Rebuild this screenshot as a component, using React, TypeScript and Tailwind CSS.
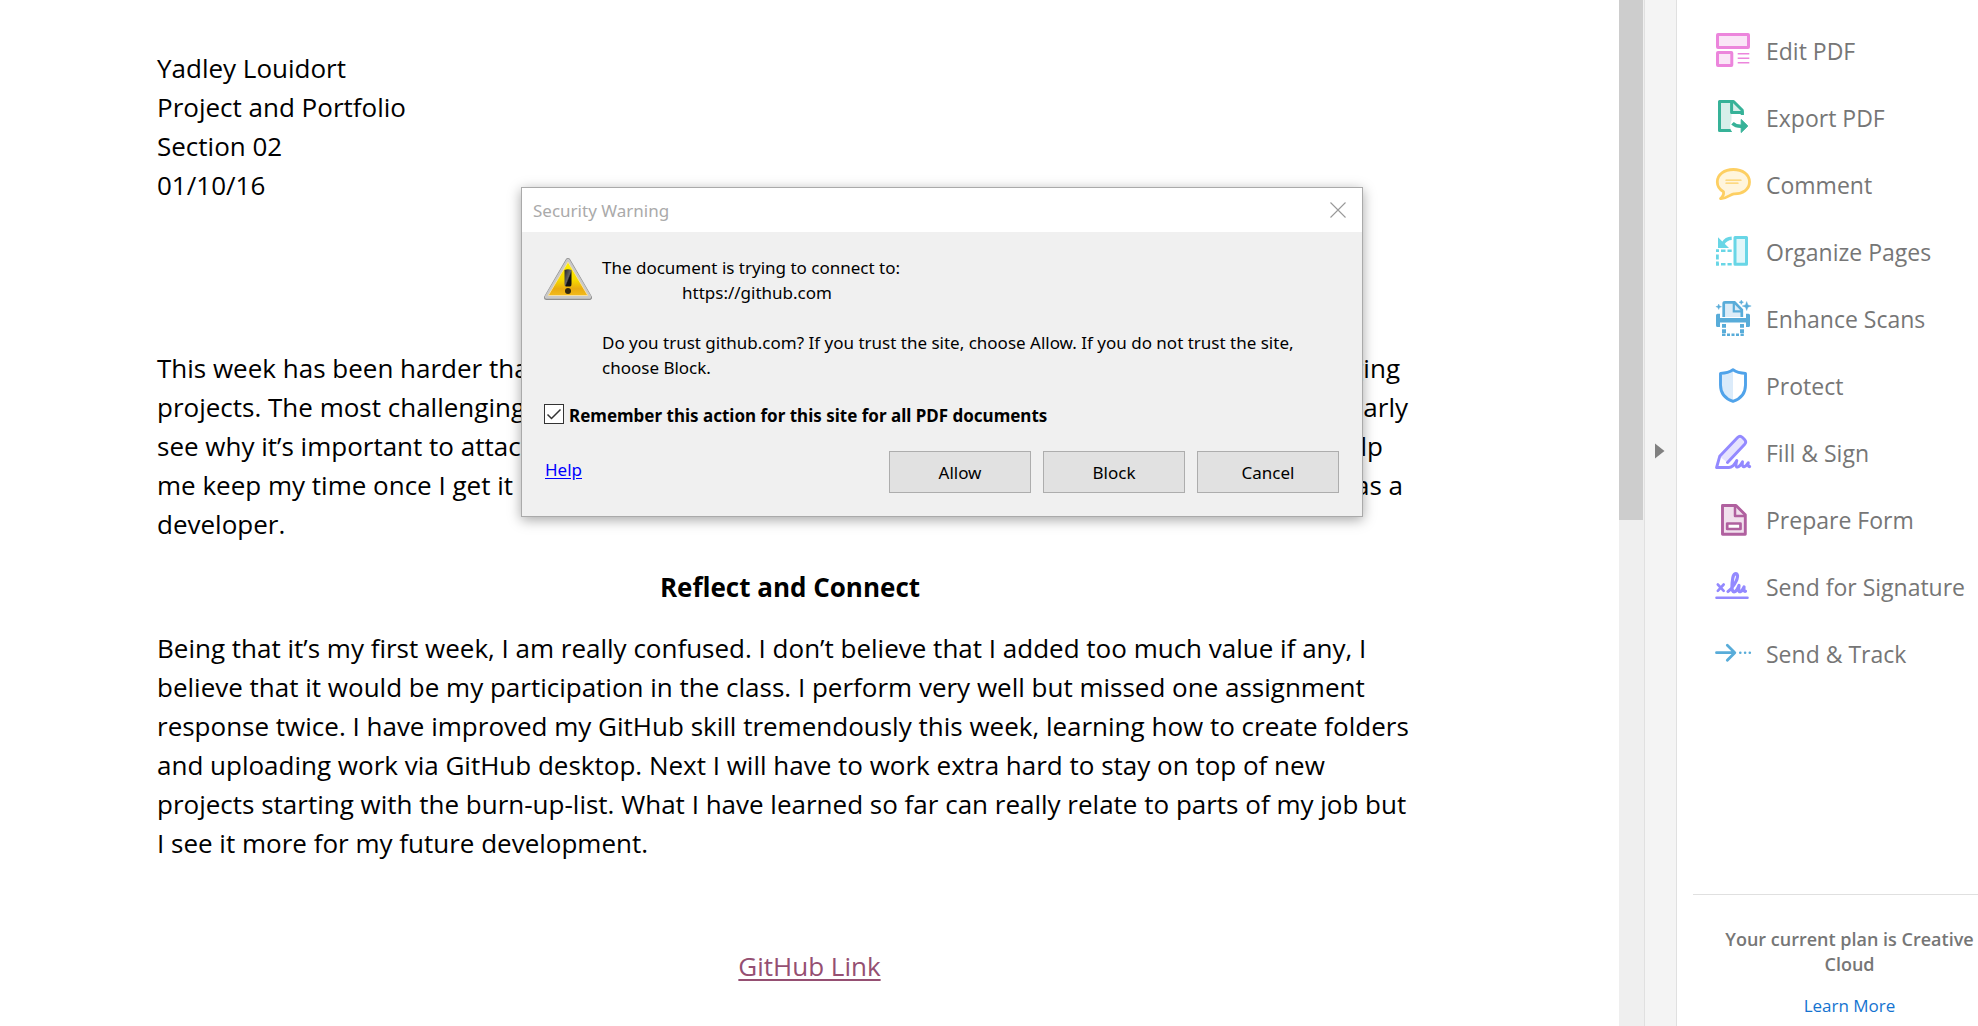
import { useState, type ReactNode } from 'react';

const iconProps = {
  viewBox: '0 0 37 37',
  className: 'h-[37px] w-[37px] shrink-0',
  fill: 'none',
  'aria-hidden': true,
} as const;

const EditIcon = () => (
  <svg {...iconProps} stroke="#ec85dc" strokeWidth="3" strokeLinejoin="round">
    <rect x="2.5" y="2.5" width="31" height="13" rx="0.5" fill="#fae5f7" />
    <rect x="2.5" y="20.5" width="14.3" height="13" rx="0.5" fill="#fae5f7" />
    <path d="M22.7 21.7H34.3M22.7 26.3H34.3M22.7 30.7H34.3" strokeWidth="1.4" />
  </svg>
);

const ExportIcon = () => (
  <svg {...iconProps} stroke="#36b298" strokeWidth="3" strokeLinejoin="round">
    <path d="M17 31.5H4.5V2.5H18.5L27.3 11.3V15H16.5V31.5Z" fill="#d7efea" stroke="none" />
    <path d="M17 31.5H4.5V2.5H18.5L27.3 11.3V16" />
    <path d="M16.6 3V13.6H27.5" />
    <circle cx="25" cy="27" r="10" fill="#fff" stroke="none" />
    <path d="M16.600 13.600H28.700M27.300 13.600V16" strokeWidth="2.800" />
    <path d="M17.5 24.2Q21 27.6 27 27.2" strokeWidth="3.6" />
    <path d="M26.2 20.5L32.8 27L26.2 33.5Z" fill="#36b298" strokeWidth="1" />
  </svg>
);

const CommentIcon = () => (
  <svg {...iconProps} stroke="#fdcf62" strokeLinecap="round" strokeLinejoin="round">
    <path
      d="M18.3 3.5C27.5 3.5 34.5 8.5 34.5 16C34.5 23.5 27.5 28 19 27.8C15.5 28 12 33 5.5 32.5C8.5 30 9 28.5 8.5 25.7C4.5 23.5 2.3 20 2.3 16C2.3 8.5 9.5 3.5 18.3 3.5Z"
      fill="#fff5dc"
      strokeWidth="2.8"
    />
    <path d="M11 14.2H26M11 17.2H23" strokeWidth="1.3" />
  </svg>
);

const OrganizeIcon = () => (
  <svg {...iconProps} stroke="#68d6e6">
    <rect x="20" y="4.5" width="11.5" height="26.7" fill="#e1f7fa" strokeWidth="3" strokeLinejoin="round" />
    <path d="M1 17.7H4M6 17.7H10.5M12.5 17.7H16.7M1 31.3H4M6 31.3H10.5M12.5 31.3H16.7" strokeWidth="2.6" />
    <path d="M2.4 16.4V19M2.4 21.5V26.5M2.4 28.5V32.6" strokeWidth="2.8" />
    <path d="M16.7 5.3Q11 5.5 8 10.5" strokeWidth="3.4" />
    <path d="M3 4.3V15H14Z" fill="#68d6e6" stroke="none" />
  </svg>
);

const ScanIcon = () => (
  <svg {...iconProps} stroke="#58acd9">
    <path d="M8.7 17V3.5Q8.7 2.4 10 2.4H19.5L26.8 9.7V17Z" fill="#dcecf7" stroke="none" />
    <path d="M8.7 17V3.5Q8.7 2.4 10 2.4H19.5L26.8 9.7V17" strokeWidth="2.7" />
    <path d="M18.8 3V11.3H26.5" strokeWidth="2.2" />
    <path
      d="M2.5 13.7H5V18H31V13.7H33.5Q35 13.7 35 15.2V25.5Q35 27 33.5 27H31V22.6H5V27H2.5Q1 27 1 25.5V15.2Q1 13.7 2.5 13.7Z"
      fill="#58acd9"
      stroke="none"
    />
    <path d="M9 24V27.8M9 29.3V33M27 24V27.8M27 29.3V33" strokeWidth="4" />
    <path d="M7 34.7H10.5M12 34.7H15M16.5 34.7H19.5M21 34.7H24M25.5 34.7H28.8" strokeWidth="2.6" />
    <path
      d="M3.7 4L4.5 6L6.5 6.7L4.5 7.5L3.7 9.5L2.9 7.5L0.9 6.7L2.9 6ZM26.3 0L27 1.5L28.5 2.2L27 2.9L26.3 4.5L25.6 2.9L24 2.2L25.6 1.5ZM31.7 1.5L32.9 4.9L36.2 6L32.9 7.2L31.7 10.5L30.5 7.2L27.2 6L30.5 4.9Z"
      fill="#58acd9"
      strokeWidth="0.4"
    />
  </svg>
);

const ShieldIcon = () => (
  <svg {...iconProps}>
    <path d="M18 2.6C14.5 5 10.5 6.2 5.5 6.4V18C5.5 26 9.5 31.5 18 34.3Z" fill="#dbebfa" />
    <path
      d="M18 2.7C21.5 5.2 25.5 6.2 30.5 6.4V18C30.5 26 26.5 31.5 18 34.3C9.5 31.5 5.5 26 5.5 18V6.4C10.5 6.2 14.5 5.2 18 2.7Z"
      stroke="#50a3ea"
      strokeWidth="2.9"
      strokeLinejoin="round"
    />
  </svg>
);

const SignIcon = () => (
  <svg {...iconProps} stroke="#9389ff" strokeWidth="2.9" strokeLinecap="round" strokeLinejoin="round">
    <path d="M22.5 3.3Q25 1 27.7 3.5L29.5 5.3Q32 7.8 29.5 10.2L12 28.3L4.5 22.5Z" fill="#e6e3fd" stroke="none" />
    <path d="M12.5 28.5L29.7 10.2Q31.8 7.800 29.5 5.5L27.5 3.5Q25 1.2 22.6 3.5L4.7 22.3L1.6 33.5H14C18 33.5 20.5 29 21.8 26.5C20.5 31 20.7 33.8 23 33C25 32.3 26.5 29.5 27.5 27.8C27 31.5 27.5 33.3 29.5 32.7C31.3 32 32.3 30 33.3 28.7C32.8 31.5 33.3 33 34.7 32.6" />
  </svg>
);

const FormIcon = () => (
  <svg {...iconProps} stroke="#b0609f" strokeWidth="2.9" strokeLinejoin="round">
    <path d="M7.5 4.5H21L30.3 13.8V33.2H7.5Z" fill="#f1e0ed" />
    <path d="M20 5V15H30" strokeWidth="2.5" />
    <rect x="12.2" y="22.5" width="13.3" height="5.5" fill="#fff" strokeWidth="2.7" />
  </svg>
);

const SignatureIcon = () => (
  <svg {...iconProps} stroke="#9389ff" strokeWidth="2.6" strokeLinecap="round" strokeLinejoin="round">
    <path d="M2.8 16.5L8.7 22.8M8.7 16.5L2.8 22.8M1.5 29.8H32.5" />
    <path
      d="M13 23.5C17 21 23 12 22.5 7.5C22 4 18.5 5.5 17.8 10C16.8 16 16 24.5 19.5 23.8C22 23 23 19.5 24 17.5C23.5 21 23.3 24 25.3 23.7C27.5 23 28.2 20.5 29 19C28.8 22 28.8 23.8 30.5 23.3"
      strokeWidth="3.2"
    />
  </svg>
);

const TrackIcon = () => (
  <svg {...iconProps} stroke="#58acd9" strokeWidth="2.8" strokeLinecap="round" strokeLinejoin="round">
    <path d="M1.5 17.7H19.5M12.3 10.3L19.8 17.7L12.3 25.3" />
    <path d="M25.3 17.7h.01M30.1 17.7h.01M34.8 17.7h.01" strokeWidth="2.6" />
  </svg>
);

const WarningIcon = () => (
  <svg viewBox="0 0 48 44" className="h-[44px] w-[48px] shrink-0" fill="none" role="img" aria-label="Warning">
    <defs>
      <linearGradient id="warnFill" x1="0" y1="0" x2="0" y2="1">
        <stop offset="0" stopColor="#fff200" />
        <stop offset="0.55" stopColor="#f5d800" />
        <stop offset="0.8" stopColor="#e9ab10" />
        <stop offset="1" stopColor="#f3bb1c" />
      </linearGradient>
      <linearGradient id="warnMark" x1="0" y1="0" x2="1" y2="1">
        <stop offset="0" stopColor="#222" />
        <stop offset="0.5" stopColor="#666" />
        <stop offset="0.6" stopColor="#111" />
      </linearGradient>
    </defs>
    <path d="M24 3.5L45.5 40.5H2.5Z" stroke="#8e8e8e" strokeWidth="5" strokeLinejoin="round" />
    <path d="M24 3.5L45.5 40H2.5Z" stroke="#c9c9c9" strokeWidth="3.5" strokeLinejoin="round" />
    <path d="M24 5L43.8 38.5H4.2Z" fill="url(#warnFill)" stroke="#f7dfa0" strokeWidth="1" strokeLinejoin="round" />
    <path d="M20.5 13Q24 11.5 27.5 13V27Q27.5 29.5 26 29.5H22Q20.5 29.5 20.5 27Z" fill="url(#warnMark)" />
    <circle cx="24" cy="34" r="3" fill="#33290f" />
  </svg>
);

const tools: { label: string; icon: ReactNode }[] = [
  { label: 'Edit PDF', icon: <EditIcon /> },
  { label: 'Export PDF', icon: <ExportIcon /> },
  { label: 'Comment', icon: <CommentIcon /> },
  { label: 'Organize Pages', icon: <OrganizeIcon /> },
  { label: 'Enhance Scans', icon: <ScanIcon /> },
  { label: 'Protect', icon: <ShieldIcon /> },
  { label: 'Fill & Sign', icon: <SignIcon /> },
  { label: 'Prepare Form', icon: <FormIcon /> },
  { label: 'Send for Signature', icon: <SignatureIcon /> },
  { label: 'Send & Track', icon: <TrackIcon /> },
];

function DocumentPage() {
  return (
    <article className="px-[157px] pt-[49px] font-['Open_Sans',sans-serif] text-[26px] leading-[39px] whitespace-nowrap text-black">
      <p>
        Yadley Louidort
        <br />
        Project and Portfolio
        <br />
        Section 02
        <br />
        01/10/16
      </p>
      <div className="mt-36">
        <p className="flex justify-between pr-[62px]">
          <span>This week has been harder than</span>
          <span>ging</span>
        </p>
        <p className="flex justify-between pr-[54px]">
          <span>projects. The most challenging</span>
          <span>early</span>
        </p>
        <p className="flex justify-between pr-[79px]">
          <span>see why it’s important to attack</span>
          <span>help</span>
        </p>
        <p className="flex justify-between pr-[59px]">
          <span>me keep my time once I get it</span>
          <span>as a</span>
        </p>
        <p>developer.</p>
      </div>
      <h2 className="mt-6 pr-[39px] text-center font-bold">Reflect and Connect</h2>
      <p className="mt-[22px]">
        Being that it’s my first week, I am really confused. I don’t believe that I added too much value if any, I
        <br />
        believe that it would be my participation in the class. I perform very well but missed one assignment
        <br />
        response twice. I have improved my GitHub skill tremendously this week, learning how to create folders
        <br />
        and uploading work via GitHub desktop. Next I will have to work extra hard to stay on top of new
        <br />
        projects starting with the burn-up-list. What I have learned so far can really relate to parts of my job but
        <br />I see it more for my future development.
      </p>
      <p className="mt-[84px] text-center">
        <a href="#github" className="text-[#954f72] underline decoration-2 underline-offset-3">
          GitHub Link
        </a>
      </p>
    </article>
  );
}

function SecurityDialog() {
  const [remember, setRemember] = useState(true);
  return (
    <section
      role="dialog"
      aria-labelledby="dialog-title"
      className="absolute top-[187px] left-[521px] w-[842px] border border-[#aaaaaa] bg-[#f0f0f0] font-['Noto_Sans',sans-serif] text-[17px] leading-[25px] text-black shadow-[0_3px_12px_rgba(0,0,0,0.35)]"
    >
      <header className="flex h-11 items-center justify-between bg-white pr-4 pl-[11px]">
        <h1 id="dialog-title" className="text-[#aaaaaa]">
          Security Warning
        </h1>
        <button type="button" aria-label="Close">
          <svg viewBox="0 0 16 16" className="h-4 w-4" stroke="#999" strokeWidth="1.1" aria-hidden="true">
            <path d="M0.5 0.5L15.5 15.5M15.5 0.5L0.5 15.5" />
          </svg>
        </button>
      </header>
      <div className="flex gap-[10px] pt-[23px] pl-[22px]">
        <div className="pt-[2px]">
          <WarningIcon />
        </div>
        <div className="whitespace-nowrap">
          <p>The document is trying to connect to:</p>
          <p className="pl-20">https://github.com</p>
          <p className="mt-[25px]">
            Do you trust github.com? If you trust the site, choose Allow. If you do not trust the site,
            <br />
            choose Block.
          </p>
        </div>
      </div>
      <label className="mt-[23px] flex items-start gap-[5px] pl-[22px] font-bold">
        <span className="mt-px grid h-5 w-5">
          <input
            type="checkbox"
            checked={remember}
            onChange={(e) => setRemember(e.target.checked)}
            className="peer col-start-1 row-start-1 h-5 w-5 appearance-none border border-[#333] bg-white"
          />
          <svg
            viewBox="0 0 20 20"
            className="pointer-events-none invisible col-start-1 row-start-1 h-5 w-5 peer-checked:visible"
            fill="none"
            stroke="#333"
            strokeWidth="1.5"
            aria-hidden="true"
          >
            <path d="M3.5 10.5L7.5 14.5L16.5 5.5" />
          </svg>
        </span>
        Remember this action for this site for all PDF documents
      </label>
      <footer className="mt-[23px] flex items-start justify-between pr-[23px] pb-[23px] pl-[23px]">
        <a href="#help" className="mt-[6px] text-[#0000ff] underline underline-offset-2">
          Help
        </a>
        <div className="flex gap-3">
          {['Allow', 'Block', 'Cancel'].map((name) => (
            <button key={name} type="button" className="h-[42px] w-[142px] border border-[#adadad] bg-[#e1e1e1]">
              {name}
            </button>
          ))}
        </div>
      </footer>
    </section>
  );
}

export default function App() {
  return (
    <div className="flex h-screen overflow-hidden bg-white">
      <main className="relative min-w-0 flex-1 overflow-hidden">
        <DocumentPage />
        <SecurityDialog />
      </main>
      <div className="w-[25px] shrink-0 bg-[#efefef]">
        <div className="h-[520px] w-6 bg-[#cdcdcd]" />
      </div>
      <div className="w-[33px] shrink-0 border-x border-[#e0e0e0] bg-[#f4f4f4] pt-[443px] pl-[10px]">
        <button type="button" aria-label="Collapse tools pane" className="block">
          <svg viewBox="0 0 10 16" className="h-4 w-[10px]" fill="#808080" aria-hidden="true">
            <path d="M0 0.5L9.5 8L0 15.5Z" />
          </svg>
        </button>
      </div>
      <aside className="flex w-[301px] shrink-0 flex-col justify-between font-['Open_Sans',sans-serif] text-[#767676]">
        <nav className="pt-[17px] pl-[38px]">
          <ul>
            {tools.map((tool) => (
              <li key={tool.label}>
                <button
                  type="button"
                  className="flex h-[67px] w-full items-center gap-[14px] text-left text-[23px] whitespace-nowrap"
                >
                  {tool.icon}
                  <span className="pt-[2px]">{tool.label}</span>
                </button>
              </li>
            ))}
          </ul>
        </nav>
        <div className="ml-4 border-t border-[#e0e0e0] pt-8 pb-2 pl-7 text-center text-[17px] leading-[25px] whitespace-nowrap">
          <p className="text-[18px] font-semibold">
            Your current plan is Creative
            <br />
            Cloud
          </p>
          <a href="#learn-more" className="mt-4 inline-block text-[#1473d0]">
            Learn More
          </a>
        </div>
      </aside>
    </div>
  );
}
